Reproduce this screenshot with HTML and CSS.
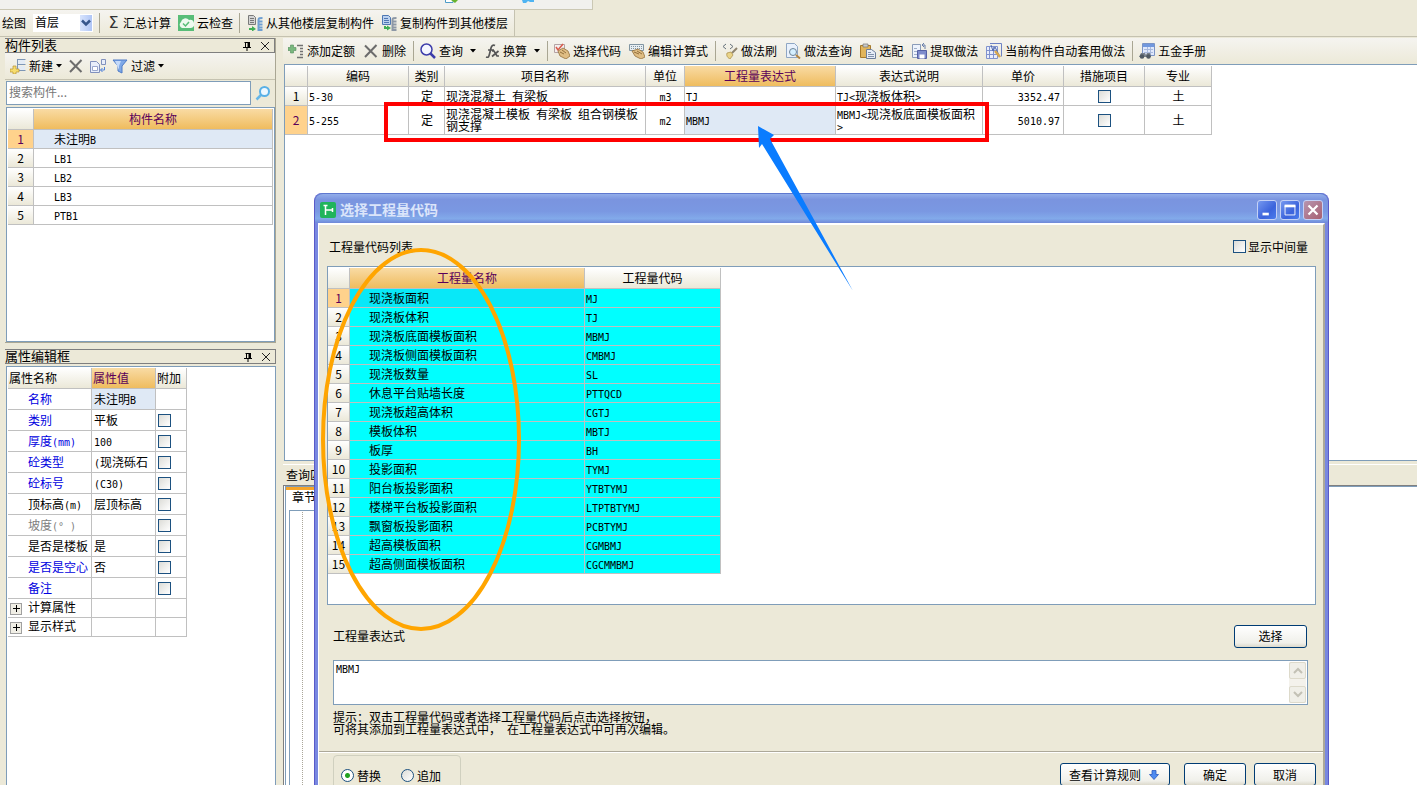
FILE: index.html
```html
<!DOCTYPE html>
<html lang="zh-CN">
<head>
<meta charset="utf-8">
<title>选择工程量代码</title>
<link rel="stylesheet" href="styles.css">
</head>
<body>
<svg class="sprite" aria-hidden="true">
  <symbol id="caret" viewBox="0 0 6 4"><path d="M0 0h6L3 3.5z" fill="#000"/></symbol>
  <symbol id="x" viewBox="0 0 16 16"><path d="M2 2.5 13.500 14M13.500 2 2 14" stroke="#6c6c6c" stroke-width="2" fill="none"/></symbol>
  <symbol id="cloud" viewBox="0 0 16 16"><path d="M0 0h16v16H0z" fill="#58bd78"/><path d="M4 13a3.500 3.500 0 0 1-1-6 4.500 4.500 0 0 1 8-2 3.800 3.800 0 0 1 2 8z" fill="#eefaf0"/><path d="m5 8.500 2.500 2.500L11 7" stroke="#58bd78" stroke-width="1.500" fill="none"/></symbol>
  <symbol id="copyfrom" viewBox="0 0 16 16"><path d="M1.500.5h5l2 2v7h-7z" fill="#d4d4d4" stroke="#7a7a7a"/><path d="M3 3.500h4M3 5.500h4M3 7.500h4" stroke="#777"/><path d="M2 13h3v-2l4 3-4 2.500V15H2z" fill="#3fae55"/><path d="M15.500 3c-3 0-4 0-4 2v10h4M11.500 6.500h4m-4 3h4m-4 3h4" stroke="#6f9fd2" stroke-width="2" fill="none"/></symbol>
  <symbol id="copyto" viewBox="0 0 16 16"><path d="M1.500.5h6l2 2v7h-8z" fill="#bcd2f0" stroke="#4f78b4"/><path d="M3 3.500h4M3 5.500h5M3 7.500h5" stroke="#4f78b4"/><path d="M3 11v3h3v1.500l4-2.500-4-2.500V12H5v-1z" fill="#3fae55"/><path d="M15.500 3c-3 0-4 0-4 2v10h4M11.500 6.500h4m-4 3h4m-4 3h4" stroke="#8d98a6" stroke-width="2" fill="none"/></symbol>
  <symbol id="new" viewBox="0 0 16 16"><path d="M7.500 1v13M7 1.500h8.500M7 6.500h8.500M7 12.500h8.500" fill="none" stroke="#7d96b5"/><path d="M8 2h7v4H8zM8 8h7v4H8z" fill="#e3ebf5"/><path d="M3 8h3v3h3v3H6v2H3v-2H0v-3h3z" fill="#f6dd6e" stroke="#b89433" stroke-width=".7"/></symbol>
  <symbol id="copy" viewBox="0 0 16 16"><path d="M.5 3.500h6l3 3v8h-9z" fill="#e8eefa" stroke="#8191bd"/><path d="M2.500 8.500h5v4h-5z" fill="#fff" stroke="#99a7cd"/><path d="M11.500 1.500h4v5h-4z" fill="#e8eefa" stroke="#8191bd"/><path d="M14.500 9v3h-4m2-2-2 2 2 2" stroke="#4f81db" fill="none"/></symbol>
  <symbol id="filter" viewBox="0 0 16 16"><path d="M1 2h14l-5 6v7l-4-2V8z" fill="#7fa9e8" stroke="#4e7bc6"/><path d="M3 3h6L7 8v4z" fill="#c5dafa"/></symbol>
  <symbol id="search" viewBox="0 0 16 16"><path d="M6.500 9.500 1.500 14.500" stroke="#66b7e8" stroke-width="2.500"/><circle cx="9.500" cy="6.500" r="4.500" fill="#eef8ff" stroke="#59b0e6" stroke-width="2"/></symbol>
  <symbol id="add" viewBox="0 0 16 16"><path d="M2.500 2h3v2.500H8v3H5.500V10h-3V7.500H0v-3h2.500z" fill="#79b87e" stroke="#548d60" stroke-width=".6"/><path d="M9 2.500h6M12 5.500h3M12 8.500h3M12 11.500h3M9 14.500h6" stroke="#727272" stroke-width="1.500"/></symbol>
  <symbol id="lens" viewBox="0 0 16 16"><circle cx="6.500" cy="6.500" r="5.500" fill="#f4f6ff" stroke="#3c3caa" stroke-width="1.500"/><path d="m10.500 10.500 4.500 4.500" stroke="#3c3caa" stroke-width="2.500"/></symbol>
  <symbol id="fx" viewBox="0 0 16 16"><path d="M2 14c3 1 3-1 4-5l1-4c.6-2.500 2-3.500 4-2.500M4 7h6M8 8h2l3 5h2M14.500 8 8 13.500" stroke="#555" stroke-width="1.700" fill="none"/></symbol>
  <symbol id="pick" viewBox="0 0 16 16"><path d="M.5 1.500h10v8H.5z" fill="#f5efef" stroke="#b4a3a3"/><path d="m2 4 2 3 5-6" stroke="#d95d4d" stroke-width="1.600" fill="none"/><path d="m4 8 5-3 5 3 2 5-4 3-6-3z" fill="#dfbd83" stroke="#94713e" stroke-width=".8"/><path d="m6 9 4 2M8 7l4 3" stroke="#94713e"/></symbol>
  <symbol id="edit" viewBox="0 0 16 16"><path d="M.5 1.500h14v6H.5z" fill="#e8eef2" stroke="#8195a2"/><path d="M2 3.500h11M2 5.500h11" stroke="#8195a2" stroke-dasharray="1 1"/><path d="m3 8 6-2 5 3 2 5-4 2-6-3z" fill="#dfbd83" stroke="#94713e" stroke-width=".8"/><path d="m5 9 5 2M8 8l5 3" stroke="#94713e"/></symbol>
  <symbol id="brush" viewBox="0 0 16 16"><path d="M4 1 1 3.500 4 6M8 1l3 2.500L8 6" stroke="#66727d" fill="none"/><path d="m15 5-5 5" stroke="#8f8470" stroke-width="2"/><path d="m5 10 4-1 2 3-3 4c-2-1-4-3-3-6z" fill="#ead489" stroke="#a88943" stroke-width=".7"/></symbol>
  <symbol id="doclens" viewBox="0 0 16 16"><path d="M1.500.5h8l3 3v11h-11z" fill="#e9f1fc" stroke="#8fa6c4"/><circle cx="8" cy="9" r="3.500" fill="#d4efff" stroke="#6e8497"/><path d="m11 12 4 3.500" stroke="#b28642" stroke-width="2"/></symbol>
  <symbol id="paste" viewBox="0 0 16 16"><path d="M.5 2.500h10v12H.5z" fill="#e1b55c" stroke="#a77a2c"/><path d="M3 1h5v3H3z" fill="#cbcbcb" stroke="#777" stroke-width=".7"/><path d="M6.500 6.500h5l4 3v6h-9z" fill="#e7edf7" stroke="#6d7e9b"/><path d="M8 9.500h3M8 11.500h6M8 13.500h6" stroke="#8292ac"/></symbol>
  <symbol id="extract" viewBox="0 0 16 16"><path d="M1.500 1.500h8v13h-8z" fill="#edf3fc" stroke="#8a9cb9"/><path d="M3 5.500h3M3 8.500h3M3 11.500h3" stroke="#a0b0ca"/><path d="M6.500 7.500h9v8h-9z" fill="#7e8ccc" stroke="#5561a4"/><path d="M8.500 11.500h5v4h-5z" fill="#fff"/><path d="M14 6V2h-3m2-2-2 2 2 2" stroke="#687eaa" fill="none"/></symbol>
  <symbol id="auto" viewBox="0 0 16 16"><path d="M.5 3.500h11v12H.5zM3.500 4v11M7.500 4v11M1 7.500h10M1 11.500h10" fill="#e9eefc" stroke="#8092ce"/><path d="M4 .5h11.500v13" fill="none" stroke="#6d82c4"/><path d="m5 2 2 6 2-4 5 10" fill="none" stroke="#526cad"/><path d="m9 8 5 6" stroke="#d7a74e" stroke-width="2.500"/></symbol>
  <symbol id="manual" viewBox="0 0 16 16"><path d="M3.500.5h12v12h-12z" fill="#dfe8fb" stroke="#7b94c5"/><path d="M4 1h11v3H4z" fill="#7198de"/><path d="M5 6.500h9M5 9.500h9M8.500 4v8M11.500 4v8" stroke="#a8b9dd"/><path d="M2 10h4l1 2 1-2h3l1 4H0z" fill="#79828c"/><circle cx="3" cy="13.500" r="2.300" fill="#4f5962"/><circle cx="9.500" cy="13.500" r="2.300" fill="#4f5962"/></symbol>
  <symbol id="pin" viewBox="0 0 10 12"><path d="M2.500 2.500h5M3.500 2v5M1 7.500h8M5 8v3" stroke="#000" fill="none"/><path d="M5.500 2H8v6H5.500z"/></symbol>
  <symbol id="close" viewBox="0 0 10 10"><path d="m1 1 8 8M9 1 1 9" stroke="#222" fill="none"/></symbol>
  <symbol id="chev" viewBox="0 0 10 7"><path d="m1 1 4 4 4-4" stroke="currentColor" stroke-width="2" fill="none"/></symbol>
  <symbol id="down" viewBox="0 0 10 10"><path d="M3 .5h4v4h2.500L5 9.500.5 4.500H3z" fill="#4f8bf0" stroke="#2a58bd" stroke-width=".8"/></symbol>
</svg>

<div class="app">
  <div class="strip">
    <div class="strip-bar">
      <svg class="strip-icon" viewBox="0 0 14 4"><path d="M.5 0v2.500H8V0" fill="#fff" stroke="#4d9cc8"/><path d="M6 0h7l-3 3z" fill="#67b32e"/></svg>
      <svg class="strip-icon" viewBox="0 0 14 4"><path d="M1 0h12v2H9L7 1 5 3H2z" fill="#4fb4f2"/></svg>
    </div>
  </div>
  <div class="bar top-bar">
    <label for="floor">绘图</label>
    <span class="combo"><select id="floor"><option>首层</option></select><svg class="combo-arrow" viewBox="0 0 12 16"><path d="m2 5.500 4 4 4-4" stroke="#36568c" stroke-width="2.500" fill="none"/></svg></span>
    <i class="sep"></i>
    <button class="tool"><span class="sigma">Σ</span>汇总计算</button>
    <button class="tool"><svg class="ico"><use href="#cloud"/></svg>云检查</button>
    <i class="sep"></i>
    <button class="tool"><svg class="ico"><use href="#copyfrom"/></svg>从其他楼层复制构件</button>
    <button class="tool"><svg class="ico"><use href="#copyto"/></svg>复制构件到其他楼层</button>
  </div>

  <div class="work">
    <aside class="dock">
      <section class="panel list-panel">
        <header class="cap"><h2>构件列表</h2><svg class="pin"><use href="#pin"/></svg><svg class="close"><use href="#close"/></svg></header>
        <div class="bar dock-bar">
          <button class="tool"><svg class="ico"><use href="#new"/></svg>新建<svg class="caret"><use href="#caret"/></svg></button>
          <button class="tool" aria-label="删除"><svg class="ico"><use href="#x"/></svg></button>
          <button class="tool" aria-label="复制"><svg class="ico"><use href="#copy"/></svg></button>
          <button class="tool"><svg class="ico"><use href="#filter"/></svg>过滤<svg class="caret"><use href="#caret"/></svg></button>
        </div>
        <div class="find"><input type="text" placeholder="搜索构件..." aria-label="搜索构件"><button aria-label="搜索"><svg class="ico"><use href="#search"/></svg></button></div>
        <div class="frame">
          <table class="grid names">
            <colgroup><col class="w26"><col></colgroup>
            <tr><th></th><th class="hot">构件名称</th></tr>
            <tr><th class="hot-no">1</th><td class="sel">未注明<code>B</code></td></tr>
            <tr><th>2</th><td><code>LB1</code></td></tr>
            <tr><th>3</th><td><code>LB2</code></td></tr>
            <tr><th>4</th><td><code>LB3</code></td></tr>
            <tr><th>5</th><td><code>PTB1</code></td></tr>
          </table>
        </div>
      </section>
      <section class="panel prop-panel">
        <header class="cap"><h2>属性编辑框</h2><svg class="pin"><use href="#pin"/></svg><svg class="close"><use href="#close"/></svg></header>
        <div class="frame">
          <table class="grid props">
            <colgroup><col class="w84"><col class="w64"><col class="w31"></colgroup>
            <tr><th>属性名称</th><th class="hot">属性值</th><th>附加</th></tr>
            <tr><td class="blue">名称</td><td class="sel">未注明<code>B</code></td><td></td></tr>
            <tr><td class="blue">类别</td><td>平板</td><td><input type="checkbox" aria-label="附加 类别"></td></tr>
            <tr><td class="blue">厚度<code>(mm)</code></td><td><code>100</code></td><td><input type="checkbox" aria-label="附加 厚度"></td></tr>
            <tr><td class="blue">砼类型</td><td><code>(</code>现浇砾石</td><td><input type="checkbox" aria-label="附加 砼类型"></td></tr>
            <tr><td class="blue">砼标号</td><td><code>(C30)</code></td><td><input type="checkbox" aria-label="附加 砼标号"></td></tr>
            <tr><td>顶标高<code>(m)</code></td><td>层顶标高</td><td><input type="checkbox" aria-label="附加 顶标高"></td></tr>
            <tr><td class="dim">坡度<code>(° )</code></td><td></td><td><input type="checkbox" aria-label="附加 坡度"></td></tr>
            <tr><td>是否是楼板</td><td>是</td><td><input type="checkbox" aria-label="附加 是否是楼板"></td></tr>
            <tr><td class="blue">是否是空心</td><td>否</td><td><input type="checkbox" aria-label="附加 是否是空心"></td></tr>
            <tr><td class="blue">备注</td><td></td><td><input type="checkbox" aria-label="附加 备注"></td></tr>
            <tr class="group"><td><button class="plus" aria-label="展开计算属性"></button>计算属性</td><td></td><td></td></tr>
            <tr class="group"><td><button class="plus" aria-label="展开显示样式"></button>显示样式</td><td></td><td></td></tr>
          </table>
        </div>
      </section>
    </aside>

    <main class="main">
      <div class="bar main-bar">
        <button class="tool"><svg class="ico"><use href="#add"/></svg>添加定额</button>
        <button class="tool"><svg class="ico"><use href="#x"/></svg>删除</button>
        <i class="sep"></i>
        <button class="tool wide"><svg class="ico"><use href="#lens"/></svg>查询<svg class="caret"><use href="#caret"/></svg></button>
        <button class="tool wide"><svg class="ico"><use href="#fx"/></svg>换算<svg class="caret"><use href="#caret"/></svg></button>
        <i class="sep"></i>
        <button class="tool"><svg class="ico"><use href="#pick"/></svg>选择代码</button>
        <button class="tool"><svg class="ico"><use href="#edit"/></svg>编辑计算式</button>
        <i class="sep"></i>
        <button class="tool"><svg class="ico"><use href="#brush"/></svg>做法刷</button>
        <button class="tool"><svg class="ico"><use href="#doclens"/></svg>做法查询</button>
        <button class="tool"><svg class="ico"><use href="#paste"/></svg>选配</button>
        <button class="tool"><svg class="ico"><use href="#extract"/></svg>提取做法</button>
        <button class="tool"><svg class="ico"><use href="#auto"/></svg>当前构件自动套用做法</button>
        <i class="sep"></i>
        <button class="tool"><svg class="ico"><use href="#manual"/></svg>五金手册</button>
      </div>
      <div class="sheet">
        <table class="grid quota">
          <colgroup><col class="w23"><col class="w101"><col class="w36"><col class="w201"><col class="w39"><col class="w151"><col class="w147"><col class="w81"><col class="w81"><col class="w67"></colgroup>
          <tr><th></th><th>编码</th><th>类别</th><th>项目名称</th><th>单位</th><th class="hot">工程量表达式</th><th>表达式说明</th><th>单价</th><th>措施项目</th><th>专业</th></tr>
          <tr><th>1</th><td><code>5-30</code></td><td class="mid">定</td><td>现浇混凝土<code> </code>有梁板</td><td class="mid"><code>m3</code></td><td><code>TJ</code></td><td><code>TJ&lt;</code>现浇板体积<code>&gt;</code></td><td class="num"><code>3352.47</code></td><td class="mid"><input type="checkbox" aria-label="措施项目 1"></td><td class="mid">土</td></tr>
          <tr class="tall"><th class="hot-no">2</th><td><code>5-255</code></td><td class="mid">定</td><td>现浇混凝土模板<code> </code>有梁板<code> </code>组合钢模板<br>钢支撑</td><td class="mid"><code>m2</code></td><td class="sel"><code>MBMJ</code></td><td><code>MBMJ&lt;</code>现浇板底面模板面积<br><code>&gt;</code></td><td class="num"><code>5010.97</code></td><td class="mid"><input type="checkbox" aria-label="措施项目 2"></td><td class="mid">土</td></tr>
        </table>
      </div>
      <section class="query">
        <header class="query-cap">查询匹</header>
        <div class="tabs"><div class="tab-page"><div class="tab">章节</div><div class="tree"></div></div></div>
      </section>
    </main>
  </div>

  <div class="dialog" role="dialog" aria-labelledby="dlg-title">
    <header class="title">
      <svg class="logo" viewBox="0 0 16 16"><rect width="16" height="16" rx="2" fill="#20b45c"/><path d="M5.500 3v10M6 8h7M3.500 3.500h4M12.500 6v4" stroke="#fff" stroke-width="1.500" fill="none"/></svg>
      <h1 id="dlg-title">选择工程量代码</h1>
      <button class="win" aria-label="最小化"><svg viewBox="0 0 20 20"><path d="M5 13h7v3H5z" fill="#fff"/></svg></button>
      <button class="win" aria-label="最大化"><svg viewBox="0 0 20 20"><path d="M4.500 5h11v10.500h-11z" stroke="#fff" fill="none"/><path d="M4 4h12v3H4z" fill="#fff"/></svg></button>
      <button class="win red" aria-label="关闭"><svg viewBox="0 0 20 20"><path d="m5 5 10 10M15 5 5 15" stroke="#fff" stroke-width="2.500"/></svg></button>
    </header>
    <div class="dlg-body">
      <div class="row list-row"><span>工程量代码列表</span><label class="check"><input type="checkbox">显示中间量</label></div>
      <div class="code-frame">
        <table class="grid codes">
          <colgroup><col class="w22"><col class="w235"><col class="w136"></colgroup>
          <tr><th></th><th class="hot">工程量名称</th><th>工程量代码</th></tr>
          <tr><th class="hot-no">1</th><td class="cur">现浇板面积</td><td><code>MJ</code></td></tr>
          <tr><th>2</th><td>现浇板体积</td><td><code>TJ</code></td></tr>
          <tr><th>3</th><td>现浇板底面模板面积</td><td><code>MBMJ</code></td></tr>
          <tr><th>4</th><td>现浇板侧面模板面积</td><td><code>CMBMJ</code></td></tr>
          <tr><th>5</th><td>现浇板数量</td><td><code>SL</code></td></tr>
          <tr><th>6</th><td>休息平台贴墙长度</td><td><code>PTTQCD</code></td></tr>
          <tr><th>7</th><td>现浇板超高体积</td><td><code>CGTJ</code></td></tr>
          <tr><th>8</th><td>模板体积</td><td><code>MBTJ</code></td></tr>
          <tr><th>9</th><td>板厚</td><td><code>BH</code></td></tr>
          <tr><th>10</th><td>投影面积</td><td><code>TYMJ</code></td></tr>
          <tr><th>11</th><td>阳台板投影面积</td><td><code>YTBTYMJ</code></td></tr>
          <tr><th>12</th><td>楼梯平台板投影面积</td><td><code>LTPTBTYMJ</code></td></tr>
          <tr><th>13</th><td>飘窗板投影面积</td><td><code>PCBTYMJ</code></td></tr>
          <tr><th>14</th><td>超高模板面积</td><td><code>CGMBMJ</code></td></tr>
          <tr><th>15</th><td>超高侧面模板面积</td><td><code>CGCMMBMJ</code></td></tr>
        </table>
      </div>
      <div class="row expr-row"><label for="expr">工程量表达式</label><button class="btn w73">选择</button></div>
      <div class="expr"><textarea id="expr">MBMJ</textarea><div class="scroll"><button aria-label="向上"><svg class="chev up"><use href="#chev"/></svg></button><button aria-label="向下"><svg class="chev"><use href="#chev"/></svg></button></div></div>
      <p class="hint">提示：双击工程量代码或者选择工程量代码后点击选择按钮，<br>可将其添加到工程量表达式中，<code> </code>在工程量表达式中可再次编辑。</p>
      <div class="foot">
        <fieldset><label><input type="radio" name="mode" checked>替换</label><label><input type="radio" name="mode">追加</label></fieldset>
        <button class="btn rule">查看计算规则<svg class="down"><use href="#down"/></svg></button>
        <button class="btn w62">确定</button>
        <button class="btn w62">取消</button>
      </div>
    </div>
  </div>

  <svg class="marks" aria-hidden="true">
    <rect x="386" y="104" width="601" height="36" fill="none" stroke="#f00" stroke-width="4"/>
    <ellipse cx="421" cy="439.500" rx="98" ry="189.500" fill="none" stroke="#ffa500" stroke-width="4"/>
    <path d="M758 126 774 135 770 139 853 291 762 144 759 148z" fill="#0a7cff"/>
  </svg>
</div>
</body>
</html>
```
FILE: styles.css
```css
* { box-sizing: border-box; }
body { margin: 0; font: 12px/12px "Noto Sans CJK SC", sans-serif; color: #000; background: #ece9d8; }
button, input, select, textarea { font: inherit; color: inherit; margin: 0; padding: 0; border: 0; border-radius: 0; }
button { background: none; white-space: nowrap; }
h1, h2, p { margin: 0; font-weight: normal; }
code { font: 10px/0 "DejaVu Sans Mono", monospace; }
.sprite { display: none; }
.app { position: relative; height: 100vh; overflow: hidden; display: flex; flex-direction: column; }

/* toolbars */
.strip { display: flex; height: 10px; flex: none; }
.strip-bar { width: 593px; background: #f1f1ee; border: solid #cbc8b4; border-width: 0 1px 1px 0; display: flex; justify-content: flex-end; gap: 62px; padding-right: 57px; }
.strip-icon { width: 14px; height: 4px; }
.bar { display: flex; align-items: center; gap: 8px; flex: none; background: linear-gradient(#f5f4f0, #ece9d8); }
.top-bar { align-self: flex-start; height: 26px; padding: 0 6px 0 2px; gap: 7px; border-right: 1px solid #c5c2b0; }
.top-bar .sep { margin-left: -1px; }
.tool { display: flex; align-items: center; gap: 3px; }
.ico { width: 16px; height: 16px; }
.caret { width: 6px; height: 4px; }
.wide .caret { margin-left: 4px; }
.sep { width: 1px; height: 20px; background: #a9a693; }
.sigma { font: 16px/16px "DejaVu Sans", sans-serif; width: 13px; color: #333; text-align: center; }
.combo { position: relative; }
.combo select { display: block; appearance: none; width: 60px; height: 18px; background: #fff; padding: 0 0 2px 2px; }
.combo-arrow { position: absolute; right: 1px; top: 1px; width: 12px; height: 16px; background: linear-gradient(90deg, #d8e4fd, #b0c6f6); pointer-events: none; }

/* left side */
.work { flex: 1; min-height: 0; display: flex; gap: 7px; padding: 1px 0 0 5px; border-top: 1px solid #c5c2b0; }
.dock { width: 271px; flex: none; display: flex; flex-direction: column; gap: 6px; }
.panel { display: flex; flex-direction: column; }
.list-panel { flex: 0 0 305px; border-right: 1px solid #a9a693; border-bottom: 1px solid #a9a693; }
.prop-panel { flex: 1; }
.cap { display: flex; align-items: center; height: 15px; flex: none; border: solid #7f7f7f; border-width: 1px 1px 1px 0; padding-right: 4px; gap: 8px; }
.cap h2 { flex: 1; font-size: 13px; line-height: 12px; padding-bottom: 1px; }
.pin { width: 10px; height: 12px; }
.close { width: 10px; height: 10px; }
.dock-bar { height: 27px; padding-left: 5px; gap: 6px; border-bottom: 1px solid #c5c2b0; }
.find { display: flex; padding: 1px 0 2px 1px; height: 27px; flex: none; }
.find input { width: 245px; border: 1px solid #7f9db9; background: #fff; padding: 0 2px 4px; outline: 0; }
.find input::placeholder { color: #777; opacity: 1; }
.find button { flex: 1; display: flex; align-items: center; justify-content: center; }
.frame { flex: 1; margin-left: 1px; border: 1px solid #7f9db9; background: #fff; padding: 1px; }
.prop-panel .frame { margin-top: 2px; border-bottom: 0; }

/* tables */
.grid { border-collapse: separate; border-spacing: 0; table-layout: fixed; }
.grid th, .grid td { height: 19px; padding: 0; border: solid #c0c0c0; border-width: 0 1px 1px 0; font-weight: normal; text-align: left; white-space: nowrap; }
.grid th { text-align: center; background: linear-gradient(#fff, #ebe8d8); }
.grid tr:first-child th { height: 21px; }
.grid th.hot { background: linear-gradient(#f9dba4, #efbc5e); color: #5a005a; }
.grid th.hot-no { background: #ffd28c; color: #5a005a; }
.grid td.sel { background: #dfe9f5; }
.grid td.mid { text-align: center; }
.names { width: 265px; }
.names td { padding-left: 20px; }
.props { width: 179px; }
.props tr:first-child th { text-align: left; padding-left: 1px; }
.props td { height: 21px; padding-left: 2px; }
.props td:first-child { padding-left: 20px; }
.props .group td { height: 19px; }
.props .group td:first-child { padding-left: 2px; }
.blue { color: #0000e0; }
.dim { color: #808080; }
.plus { width: 12px; height: 12px; margin-right: 6px; vertical-align: middle; border: 1px solid #a0a0a0; background: linear-gradient(#000, #000) center/7px 1px no-repeat, linear-gradient(#000, #000) center/1px 7px no-repeat, #f1efe6; }
.quota { width: 927px; }
.quota td { padding-left: 1px; }
.quota .tall td, .quota .tall th { height: 29px; }
.quota td.num { text-align: right; padding-right: 3px; }
.codes { width: 393px; }
.codes td { background: #0ff; padding-left: 1px; }
.codes td:nth-child(2) { padding-left: 19px; }
.grid td.cur { background: #08e8f8; }
.w22 { width: 22px; }
.w23 { width: 23px; }
.w26 { width: 26px; }
.w31 { width: 31px; }
.w36 { width: 36px; }
.w39 { width: 39px; }
.w62 { width: 62px; }
.w64 { width: 64px; }
.w67 { width: 67px; }
.w73 { width: 73px; }
.w81 { width: 81px; }
.w84 { width: 84px; }
.w101 { width: 101px; }
.w136 { width: 136px; }
.w147 { width: 147px; }
.w151 { width: 151px; }
.w201 { width: 201px; }
.w235 { width: 235px; }

input[type="checkbox"] { appearance: none; width: 13px; height: 13px; border: 1px solid #1c5180; background: linear-gradient(135deg, #dcdcd7, #fff); vertical-align: middle; }
input[type="radio"] { appearance: none; width: 13px; height: 13px; border: 1px solid #1c5180; border-radius: 50%; background: linear-gradient(135deg, #dcdcd7, #fff); }
input[type="radio"]:checked { background: radial-gradient(circle, #21a121 0 2px, #fff 3px); }

/* right side */
.main { flex: 1; min-width: 0; display: flex; flex-direction: column; }
.main-bar { height: 26px; padding: 0 0 1px 5px; }
.main-bar .sep { margin: 0 -2px 0 -1px; }
.sheet { flex: none; height: 397px; margin-left: 1px; border: solid #7f9db9; border-width: 1px 0 1px 1px; background: #fff; padding: 1px 0 0; }
.query { flex: 1; display: flex; flex-direction: column; margin-top: 3px; border-top: 1px solid #fff; }
.query-cap { height: 21px; padding: 4px 3px; border-bottom: 1px solid #7f7f7f; }
.tabs { flex: 1; display: flex; border-left: 1px solid #7f7f7f; background: #fff; padding-left: 1px; }
.tab-page { flex: 1; display: flex; flex-direction: column; border-left: 1px solid #7f9db9; border-top: 1px solid #7f9db9; }
.tab { width: 64px; height: 23px; padding: 1px 6px; border-top: 3px solid #f5a428; }
.tree { flex: 1; width: 240px; margin-left: 3px; border: solid #7f9db9; border-width: 1px 0 0 1px; background: repeating-linear-gradient(#aaa69a 0 1px, #fff 1px 2px) 12px 1px/1px 100% no-repeat; }

/* dialog */
.dialog { position: absolute; left: 314px; right: 88px; top: 193px; bottom: 0; display: flex; flex-direction: column; border-radius: 8px 8px 0 0; border: solid #5a5ac8; border-width: 0 1px; background: #7888e0; padding: 0 3px; }
.title { display: flex; align-items: center; gap: 3px; height: 30px; flex: none; margin: 0 -3px; padding: 2px 5px 0; border-radius: 8px 8px 0 0; border-top: 1px solid #5f78cf; background: linear-gradient(#93aeea, #7a94df 20%, #7a98e2 60%, #82aaea 85%, #7088d8); }
.title h1 { flex: 1; font-size: 14px; line-height: 14px; font-weight: bold; color: #dbe5fa; padding: 0 0 2px 1px; }
.logo { width: 16px; height: 16px; }
.win { width: 20px; height: 20px; border: 1px solid #c4d1f6; border-radius: 3px; background: linear-gradient(135deg, #7598ef, #3b63dc 60%, #4a7cec); }
.win svg { display: block; width: 18px; height: 18px; }
.win.red { background: linear-gradient(135deg, #b795b0, #a85f70); }
.dlg-body { flex: 1; display: flex; flex-direction: column; background: #ece9d8; border: solid #fff; border-width: 2px 2px 0 1px; border-right-color: #aca899; }
.row { display: flex; align-items: center; justify-content: space-between; flex: none; }
.list-row { height: 41px; padding: 2px 15px 0 10px; }
.check { display: flex; align-items: center; gap: 2px; }
.code-frame { flex: none; height: 339px; margin: 0 7px 0 8px; border: 1px solid #7f9db9; background: #fff; padding: 1px 0 0; }
.expr-row { height: 55px; padding: 7px 16px 0 14px; }
.btn { height: 23px; border: 1px solid #003c74; border-radius: 3px; background: linear-gradient(#fff, #f0f0ea 80%, #dcd9cb); }
.expr { display: flex; flex: none; height: 45px; margin: 0 15px 0 14px; border: 1px solid #7f9db9; background: #fff; padding: 1px; }
.expr textarea { flex: 1; resize: none; background: #fff; font: 10px/12px "DejaVu Sans Mono", monospace; padding: 2px 1px; outline: 0; overflow: hidden; }
.scroll { width: 17px; display: flex; flex-direction: column; justify-content: space-between; background: #f4f2ec; }
.scroll button { height: 17px; border: 1px solid #dddacb; border-radius: 2px; background: #f0efe8; color: #c3c1b5; display: flex; align-items: center; justify-content: center; }
.chev { width: 10px; height: 7px; }
.up { transform: rotate(180deg); }
.hint { margin: 6px 14px 16px; }
.foot { flex: 1; display: flex; align-items: flex-start; gap: 8px; padding: 3px 7px 0 14px; border-top: 1px solid #aca899; box-shadow: inset 0 1px #fff; }
.foot fieldset { display: flex; gap: 20px; width: 128px; height: 40px; margin: 0 auto 0 0; padding: 13px 7px 0; border: 1px solid #d0d0bf; border-radius: 4px; }
.foot fieldset label { display: flex; align-items: center; gap: 3px; height: 13px; }
.foot .btn { margin-top: 8px; }
.rule { display: flex; align-items: center; gap: 8px; width: 110px; padding: 0 8px; }
.foot .rule { margin-right: 6px; }
.down { width: 10px; height: 10px; }
.marks { position: absolute; left: 0; top: 0; width: 100%; height: 100%; pointer-events: none; }
```
